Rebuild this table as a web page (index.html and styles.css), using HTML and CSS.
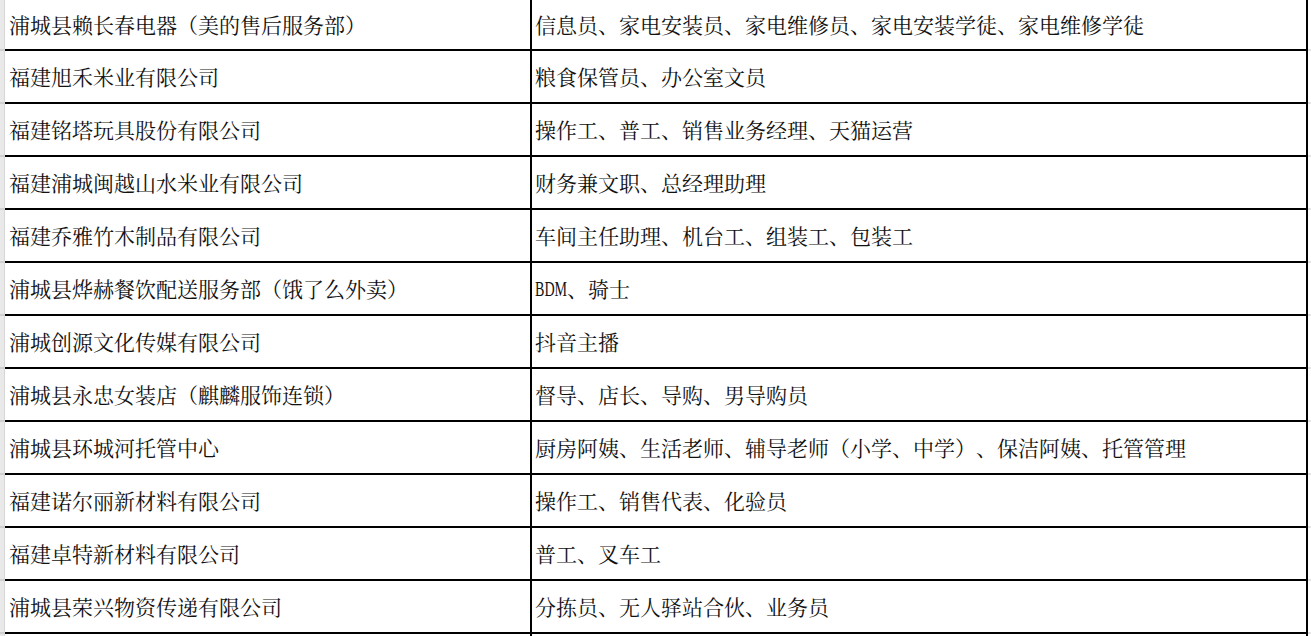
FILE: index.html
```html
<!DOCTYPE html>
<html lang="zh">
<head>
<meta charset="utf-8">
<title>企业招聘岗位</title>
<link rel="stylesheet" href="styles.css">
</head>
<body>
<div class="sheet">
  <div class="row first"><div class="gut-l"></div><div class="c1">浦城县赖长春电器（美的售后服务部）</div><div class="c2">信息员、家电安装员、家电维修员、家电安装学徒、家电维修学徒</div><div class="gut-r"></div></div>
  <div class="row"><div class="gut-l"></div><div class="c1">福建旭禾米业有限公司</div><div class="c2">粮食保管员、办公室文员</div><div class="gut-r"></div></div>
  <div class="row"><div class="gut-l"></div><div class="c1">福建铭塔玩具股份有限公司</div><div class="c2">操作工、普工、销售业务经理、天猫运营</div><div class="gut-r"></div></div>
  <div class="row"><div class="gut-l"></div><div class="c1">福建浦城闽越山水米业有限公司</div><div class="c2">财务兼文职、总经理助理</div><div class="gut-r"></div></div>
  <div class="row"><div class="gut-l"></div><div class="c1">福建乔雅竹木制品有限公司</div><div class="c2">车间主任助理、机台工、组装工、包装工</div><div class="gut-r"></div></div>
  <div class="row"><div class="gut-l"></div><div class="c1">浦城县烨赫餐饮配送服务部（饿了么外卖）</div><div class="c2"><span class="lat"><span class="lat-in">BDM</span></span>、骑士</div><div class="gut-r"></div></div>
  <div class="row"><div class="gut-l"></div><div class="c1">浦城创源文化传媒有限公司</div><div class="c2">抖音主播</div><div class="gut-r"></div></div>
  <div class="row"><div class="gut-l"></div><div class="c1">浦城县永忠女装店（麒麟服饰连锁）</div><div class="c2">督导、店长、导购、男导购员</div><div class="gut-r"></div></div>
  <div class="row"><div class="gut-l"></div><div class="c1">浦城县环城河托管中心</div><div class="c2">厨房阿姨、生活老师、辅导老师（小学、中学）、保洁阿姨、托管管理</div><div class="gut-r"></div></div>
  <div class="row"><div class="gut-l"></div><div class="c1">福建诺尔丽新材料有限公司</div><div class="c2">操作工、销售代表、化验员</div><div class="gut-r"></div></div>
  <div class="row"><div class="gut-l"></div><div class="c1">福建卓特新材料有限公司</div><div class="c2">普工、叉车工</div><div class="gut-r"></div></div>
  <div class="row"><div class="gut-l"></div><div class="c1">浦城县荣兴物资传递有限公司</div><div class="c2">分拣员、无人驿站合伙、业务员</div><div class="gut-r"></div></div>
  <div class="row"><div class="gut-l"></div><div class="c1"></div><div class="c2"></div><div class="gut-r"></div></div>
</div>
</body>
</html>
```
FILE: styles.css
```css
html, body {
  margin: 0;
  padding: 0;
  background: #ffffff;
  overflow: hidden;
}
body {
  width: 1311px;
  height: 636px;
  font-family: "Noto Serif CJK SC", "Noto Sans CJK SC", "Liberation Serif", serif;
  font-size: 21px;
  color: #111111;
  text-spacing-trim: space-all;
}
.sheet {
  display: flex;
  flex-direction: column;
}
.row {
  display: flex;
  height: 53px;
  flex: none;
}
.row.first {
  height: 51px;
}
.gut-l {
  width: 4px;
  flex: none;
  background: #e9e9e9;
  border-right: 1px solid #d6d6d6;
  box-shadow: inset 0 -2px 0 #cfcfcf;
}
.c1, .c2 {
  display: flex;
  align-items: center;
  border-bottom: 2px solid #000000;
  border-right: 2px solid #000000;
  white-space: nowrap;
  overflow: hidden;
  line-height: 1;
  box-sizing: border-box;
  flex: none;
}
.c1 {
  width: 527px;
  padding-left: 4px;
}
.c2 {
  width: 776px;
  padding-left: 3px;
}
.gut-r {
  flex: 1;
  box-shadow: inset 0 -2px 0 #e4e4e4;
}
.lat {
  display: inline-block;
  width: 32px;
  overflow: visible;
}
.lat-in {
  display: inline-block;
  font-family: "Liberation Serif", serif;
  font-size: 22px;
  transform: scaleX(0.64);
  transform-origin: left center;
}
```
